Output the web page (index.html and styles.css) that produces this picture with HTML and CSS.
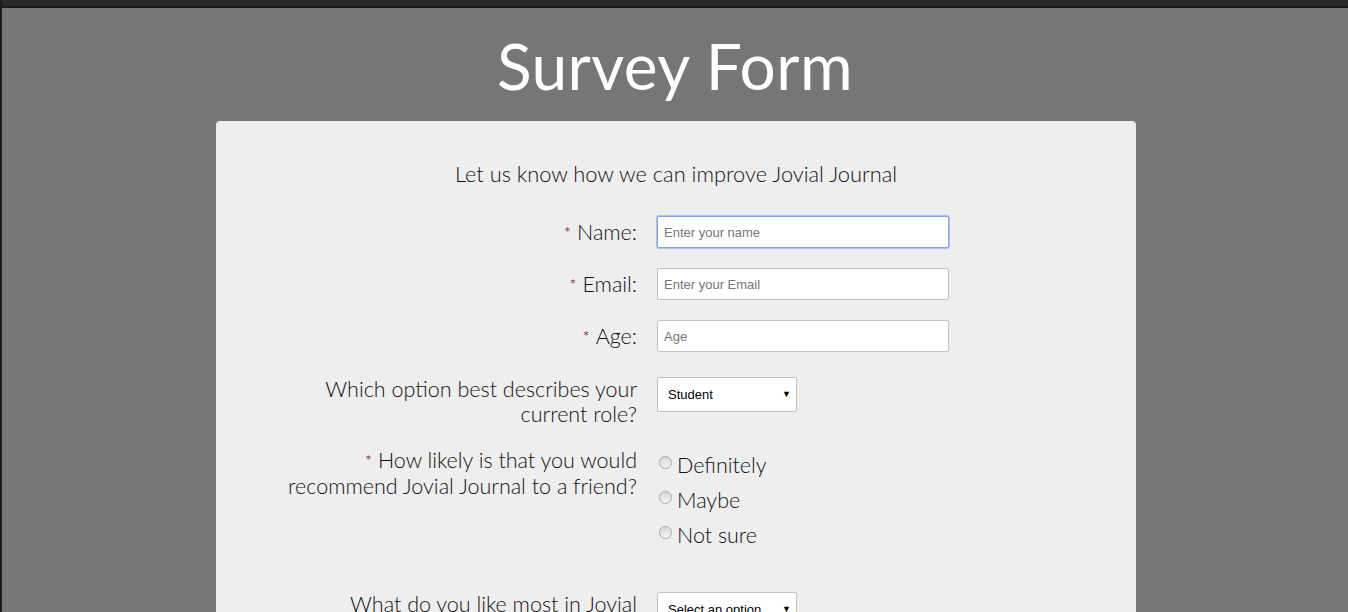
FILE: index.html
```html
<!DOCTYPE html>
<html lang="en">
<head>
<meta charset="utf-8">
<title>Survey Form</title>
<link rel="stylesheet" href="styles.css">
</head>
<body>
<div class="topbar"></div>
<main class="page">
  <h1 class="title">Survey Form</h1>
  <form class="card">
    <p class="intro">Let us know how we can improve Jovial Journal</p>

    <div class="row row-input">
      <label class="label" for="name"><span class="req">*</span>Name:</label>
      <input class="field focused" id="name" type="text" placeholder="Enter your name">
    </div>
    <div class="row row-input">
      <label class="label" for="email"><span class="req">*</span>Email:</label>
      <input class="field" id="email" type="email" placeholder="Enter your Email">
    </div>
    <div class="row row-input row-last-input">
      <label class="label" for="age"><span class="req">*</span>Age:</label>
      <input class="field" id="age" type="number" placeholder="Age">
    </div>

    <div class="row row-select">
      <label class="label" for="role">Which option best describes your current role?</label>
      <div class="select-wrap">
        <select class="select" id="role">
          <option>Student</option>
          <option>Full Time Job</option>
          <option>Full Time Learner</option>
          <option>Prefer not to say</option>
          <option>Other</option>
        </select>
        <span class="arrow">&#9660;</span>
      </div>
    </div>

    <div class="row row-radio">
      <div class="label"><span class="req">*</span>How likely is that you would recommend Jovial Journal to a friend?</div>
      <div class="radios">
        <label class="radio"><input type="radio" name="rec"><span>Definitely</span></label>
        <label class="radio"><input type="radio" name="rec"><span>Maybe</span></label>
        <label class="radio"><input type="radio" name="rec"><span>Not sure</span></label>
      </div>
    </div>

    <div class="row row-select">
      <label class="label" for="most">What do you like most in Jovial Journal?</label>
      <div class="select-wrap">
        <select class="select" id="most">
          <option>Select an option</option>
          <option>Challenges</option>
          <option>Projects</option>
          <option>Community</option>
        </select>
        <span class="arrow">&#9660;</span>
      </div>
    </div>
  </form>
</main>
</body>
</html>
```

FILE: styles.css
```css
html, body {
  margin: 0;
  padding: 0;
}

body {
  background: #767676;
  font-family: "Lato", "Noto Sans", sans-serif;
  font-weight: 300;
  color: #111111;
  border-left: 2px solid #1c1c1c;
  min-height: 612px;
  box-sizing: border-box;
  overflow: hidden;
}

.topbar {
  height: 6px;
  background: #2a2a2a;
  border-bottom: 2px solid #1a1a1a;
  margin-left: -2px;
}

.page {
  display: flex;
  flex-direction: column;
  align-items: center;
}

.title {
  margin: 23px 0 0 0;
  height: 90px;
  font-size: 64px;
  line-height: 70px;
  font-weight: 400;
  color: #ffffff;
  letter-spacing: 0.4px;
}

.card {
  width: 920px;
  margin-left: 2px;
  background: #eeeeee;
  border-radius: 4px;
  padding: 40px 0 60px 0;
  box-sizing: border-box;
}

.intro {
  margin: 0 0 30px 0;
  text-align: center;
  font-size: 21.8px;
  line-height: 25px;
}

.row {
  display: flex;
  align-items: flex-start;
}

.label {
  width: 360px;
  margin-left: 61px;
  margin-right: 20px;
  text-align: right;
  font-size: 21.5px;
  line-height: 25px;
  flex-shrink: 0;
}

.req {
  display: inline-block;
  color: #6e1020;
  font-size: 17px;
  margin-right: 6px;
}

.row-input {
  margin-bottom: 20px;
}

.row-input .label {
  padding-top: 4px;
}

.row-last-input {
  margin-bottom: 25px;
}

.row-select {
  margin-bottom: 21px;
}

.field {
  width: 292px;
  height: 32px;
  box-sizing: border-box;
  border: 1px solid #c2c2c2;
  border-radius: 2px;
  background: #ffffff;
  padding: 0 6px;
  font-family: "Liberation Sans", Arial, sans-serif;
  font-size: 13px;
  color: #222;
  outline: none;
}

.field::placeholder {
  color: #757575;
}

.field.focused {
  border-color: #7fa4ec;
  box-shadow: 0 0 0 1px #a9c2f4;
}

.select-wrap {
  position: relative;
  width: 140px;
  height: 35px;
}

.select {
  -webkit-appearance: none;
  appearance: none;
  width: 140px;
  height: 35px;
  box-sizing: border-box;
  border: 1px solid #c2c2c2;
  border-radius: 2px;
  background: #ffffff;
  padding: 0 24px 0 10px;
  font-family: "Liberation Sans", Arial, sans-serif;
  font-size: 13px;
  color: #000;
  outline: none;
}

.arrow {
  position: absolute;
  right: 6px;
  top: 11px;
  font-size: 9px;
  line-height: 12px;
  color: #000;
  pointer-events: none;
}

.row-radio {
  margin-bottom: 39px;
}

.radios {
  display: flex;
  flex-direction: column;
}

.radio {
  display: flex;
  align-items: flex-start;
  height: 35px;
  font-size: 21.5px;
  line-height: 35px;
}

.radio input {
  -webkit-appearance: none;
  appearance: none;
  width: 13px;
  height: 13px;
  box-sizing: border-box;
  margin: 8px 5px 0 2px;
  border: 1px solid #a9a9a9;
  border-radius: 50%;
  background: linear-gradient(#d6d6d6, #f4f4f4);
}
```
